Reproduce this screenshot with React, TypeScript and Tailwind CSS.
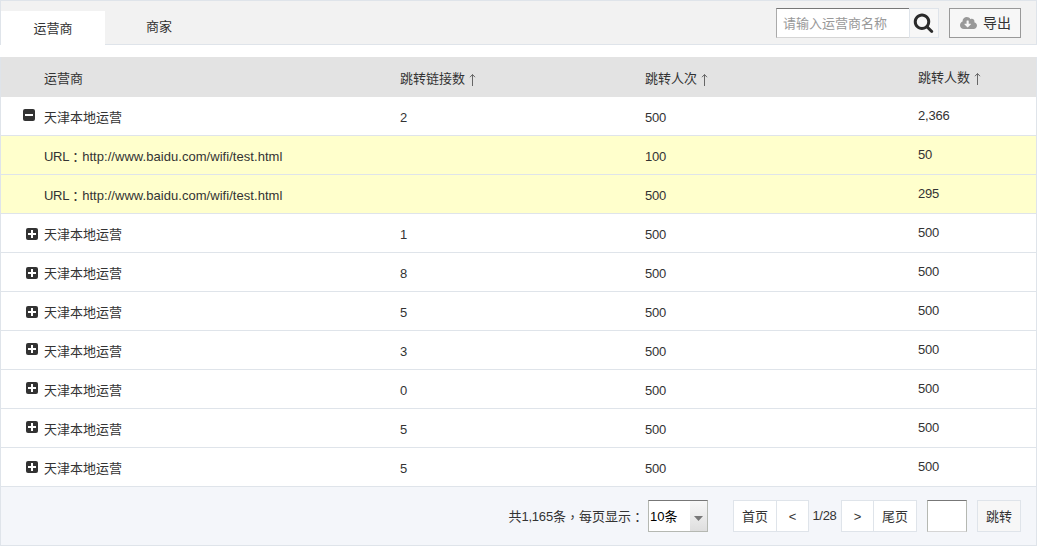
import { FaCloudDownloadAlt } from "react-icons/fa";

type Row = { kind: "open" | "closed" | "url"; links?: string; visits: string; people: string; icon?: string };

const rows: Row[] = [
  { kind: "open", links: "2", visits: "500", people: "2,366", icon: "ml-[22px] mt-3" },
  { kind: "url", visits: "100", people: "50" },
  { kind: "url", visits: "500", people: "295" },
  { kind: "closed", links: "1", visits: "500", people: "500", icon: "ml-[25px] mt-3.5" },
  { kind: "closed", links: "8", visits: "500", people: "500", icon: "ml-[25px] mt-3.5" },
  { kind: "closed", links: "5", visits: "500", people: "500", icon: "ml-[25px] mt-3.5" },
  { kind: "closed", links: "3", visits: "500", people: "500", icon: "ml-[25px] mt-3" },
  { kind: "closed", links: "0", visits: "500", people: "500", icon: "ml-[25px] mt-3" },
  { kind: "closed", links: "5", visits: "500", people: "500", icon: "ml-[25px] mt-3" },
  { kind: "closed", links: "5", visits: "500", people: "500", icon: "ml-[25px] mt-[13px]" },
];

const columns = "grid grid-cols-[43px_356px_245px_273px_1fr]";

function Toggle({ open, className }: { open: boolean; className?: string }) {
  return (
    <svg className={className} width="12" height="12" viewBox="0 0 12 12">
      <rect width="12" height="12" rx="2" fill="#333" />
      <rect x="2" y="5" width="8" height="2" fill="#fff" />
      {!open && <rect x="5" y="2" width="2" height="8" fill="#fff" />}
    </svg>
  );
}

function Arrow() {
  return (
    <svg className="ml-1 mt-4 shrink-0" width="7" height="13" viewBox="0 0 7 13" fill="none" stroke="#666">
      <path d="M3.5 1.5V13M1 4.2L3.5 1.5L6 4.2" />
    </svg>
  );
}

function Wide({ children }: { children: string }) {
  return <span className="relative top-px font-['Noto_Sans_CJK_TC',sans-serif]">{children}</span>;
}

export default function App() {
  return (
    <div className="h-[546px] w-[1037px] bg-white font-['Liberation_Sans','Noto_Sans_CJK_SC',sans-serif] text-[13px] text-[#333]">
      <div className="flex h-[45px] justify-between border border-[#dfe4ea] bg-[#f2f2f2]">
        <div className="flex">
          <div className="mt-2.5 h-[34px] w-[104px] bg-white text-center leading-9">运营商</div>
          <div className="ml-[41px] mt-2 leading-9">商家</div>
        </div>
        <div className="flex pr-[15px] pt-[7px]">
          <input
            className="h-[30px] w-[133px] border border-r-0 border-b-[#d5d5d5] border-l-[#aaa] border-t-[#777] bg-white pl-1.5 placeholder:text-[#999] focus:outline-none"
            placeholder="请输入运营商名称"
          />
          <button className="flex h-[30px] w-[30px] items-center justify-center border border-[#dfe4ea] bg-[#f7f7f7] pb-px pr-px">
            <svg width="21" height="21" viewBox="0 0 1792 1792" fill="#2b2b2b">
              <path d="M1216 832q0-185-131.5-316.5t-316.5-131.5-316.5 131.5-131.5 316.5 131.5 316.5 316.5 131.5 316.5-131.5 131.5-316.5zm512 832q0 52-38 90t-90 38q-54 0-90-38l-343-342q-179 124-399 124-143 0-273.5-55.5t-225-150-150-225-55.5-273.5 55.5-273.5 150-225 225-150 273.5-55.5 273.5 55.5 225 150 150 225 55.5 273.5q0 220-124 399l343 343q37 37 37 90z" />
            </svg>
          </button>
          <button className="ml-2.5 flex h-[30px] w-[72px] items-center border border-[#999] bg-[#f7f7f7] pl-2.5">
            <FaCloudDownloadAlt className="mr-1.5 h-[14px] w-[17px] text-[#999]" />
            <span className="text-sm leading-7">导出</span>
          </button>
        </div>
      </div>
      <div className="mt-3 border border-t-0 border-[#dfe4ea]">
        <div className={`${columns} h-10 bg-[#e3e3e3] leading-[43px]`}>
          <span />
          <span>运营商</span>
          <span className="flex">跳转链接数<Arrow /></span>
          <span className="flex">跳转人次<Arrow /></span>
          <span className="-mt-px flex">跳转人数<Arrow /></span>
        </div>
        {rows.map((row, i) => (
          <div
            key={i}
            className={`${columns} h-[39px] overflow-hidden border-b border-[#dfe4ea] leading-[42px] ${row.kind === "url" ? "bg-[#ffffcc]" : "bg-white"}`}
          >
            <span>{row.kind !== "url" && <Toggle open={row.kind === "open"} className={row.icon} />}</span>
            {row.kind === "url" ? (
              <span className="-mt-px whitespace-nowrap"><span className="tracking-[-0.3px]">URL</span><Wide>：</Wide><span className="tracking-[0.045px]">http://www.baidu.com/wifi/test.html</span></span>
            ) : (
              <span>天津本地运营</span>
            )}
            <span className="tracking-[-0.2px]">{row.links}</span>
            <span className="tracking-[-0.2px]">{row.visits}</span>
            <span className="-mt-0.5 tracking-[-0.2px]">{row.people}</span>
          </div>
        ))}
        <div className="flex h-[58px] items-start justify-end bg-[#f4f6fa] pr-[15px] pt-[13px] leading-8">
          <span className="mr-1">共<span className="tracking-[-0.2px]">1,165</span>条<Wide>，</Wide>每页显示<Wide>：</Wide></span>
          <div className="mr-[25px] flex h-8 w-[60px] border border-[#b5b8b2] border-t-[#777] bg-white text-black">
            <span className="w-[41px] pl-px leading-8">10条</span>
            <span className="flex w-[17px] items-center justify-center bg-linear-to-b from-[#f8f8f8] to-[#dedede] pt-1">
              <svg width="9" height="5" viewBox="0 0 9 5" fill="#777"><path d="M0 0H9L4.5 5Z" /></svg>
            </span>
          </div>
          <button className="h-8 w-11 border border-[#dfe4ea] bg-white leading-8">首页</button>
          <button className="-ml-px h-8 w-[33px] border border-[#dfe4ea] bg-white leading-8">&lt;</button>
          <span className="w-8 pr-px text-center leading-8 tracking-[-0.3px]">1/28</span>
          <button className="h-8 w-[33px] border border-[#dfe4ea] bg-white leading-8">&gt;</button>
          <button className="-ml-px h-8 w-11 border border-[#dfe4ea] bg-white leading-8">尾页</button>
          <input className="ml-2.5 h-8 w-10 border border-[#b5b8b2] border-b-[#d5d5d5] border-t-[#777] bg-white px-1 focus:outline-none" />
          <button className="ml-2.5 h-8 w-11 border border-[#dfe4ea] bg-[#f7f7f7] leading-8">跳转</button>
        </div>
      </div>
    </div>
  );
}
